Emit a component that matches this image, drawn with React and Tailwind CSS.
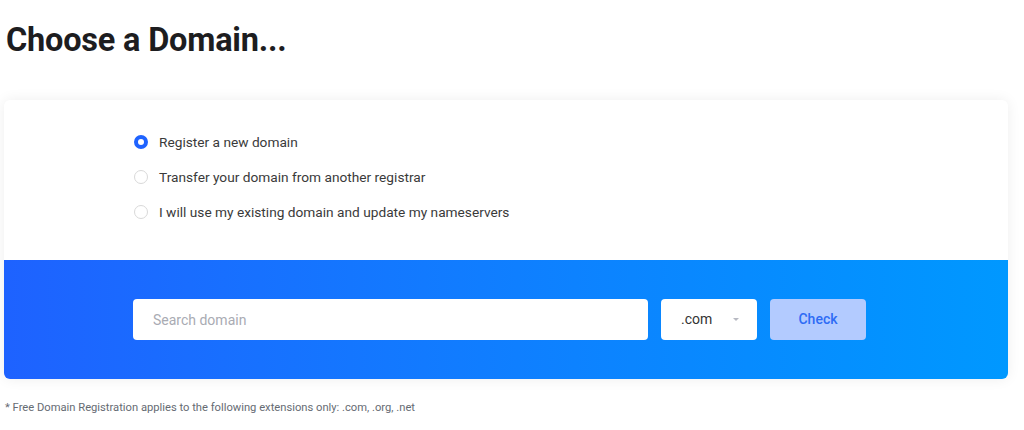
import React, { useState } from 'react';

const options = [
  'Register a new domain',
  'Transfer your domain from another registrar',
  'I will use my existing domain and update my nameservers',
];

function Radio({ checked }) {
  return checked ? (
    <span className="w-[14px] h-[14px] rounded-full border-[4px] border-[#1f63ff] bg-white shrink-0"></span>
  ) : (
    <span className="w-[14px] h-[14px] rounded-full border border-[#d9d9d9] bg-white shrink-0"></span>
  );
}

export default function App() {
  const [selected, setSelected] = useState(0);

  return (
    <div className="min-h-screen bg-white font-['Roboto',sans-serif] pl-[4px] pr-[16px]">
      {/* Header */}
      <h1 className="text-[32.5px] leading-[38px] font-bold text-[#1d1d1f] pt-[21px] pl-[2px] tracking-[-0.2px]">
        Choose a Domain...
      </h1>

      {/* Card */}
      <div className="mt-[41px] bg-white rounded-[6px] shadow-[0_0_14px_rgba(0,0,0,0.07)] overflow-hidden">
        <div className="h-[160px] pl-[130px] pt-[33px] flex flex-col gap-[17px]">
          {options.map((label, i) => (
            <label
              key={label}
              className="flex items-center gap-[11px] h-[18px] cursor-pointer"
              onClick={() => setSelected(i)}
            >
              <Radio checked={selected === i} />
              <span className="text-[13.7px] text-[#3a3a3a]">{label}</span>
            </label>
          ))}
        </div>

        <div className="h-[119px] bg-gradient-to-r from-[#1e62ff] to-[#0098ff] pl-[129px] flex items-center gap-[13px]">
          <input
            type="text"
            placeholder="Search domain"
            className="w-[515px] h-[41px] rounded-[4px] bg-white px-[20px] text-[14px] text-[#333] placeholder:text-[#a9abb3] outline-none"
          />
          <div className="w-[96px] h-[41px] rounded-[4px] bg-white flex items-center justify-between pl-[20px] pr-[18px]">
            <span className="text-[14px] text-[#333333]">.com</span>
            <span className="w-0 h-0 border-l-[3px] border-r-[3px] border-t-[3px] border-l-transparent border-r-transparent border-t-[#b7b9c2]"></span>
          </div>
          <button className="w-[96px] h-[41px] rounded-[4px] bg-[#b3cbff] text-[14px] font-medium text-[#2e6bf5]">
            Check
          </button>
        </div>
      </div>

      {/* Footnote */}
      <p className="mt-[21px] pl-[1px] text-[11.2px] text-[#666b73]">
        * Free Domain Registration applies to the following extensions only: .com, .org, .net
      </p>
    </div>
  );
}
